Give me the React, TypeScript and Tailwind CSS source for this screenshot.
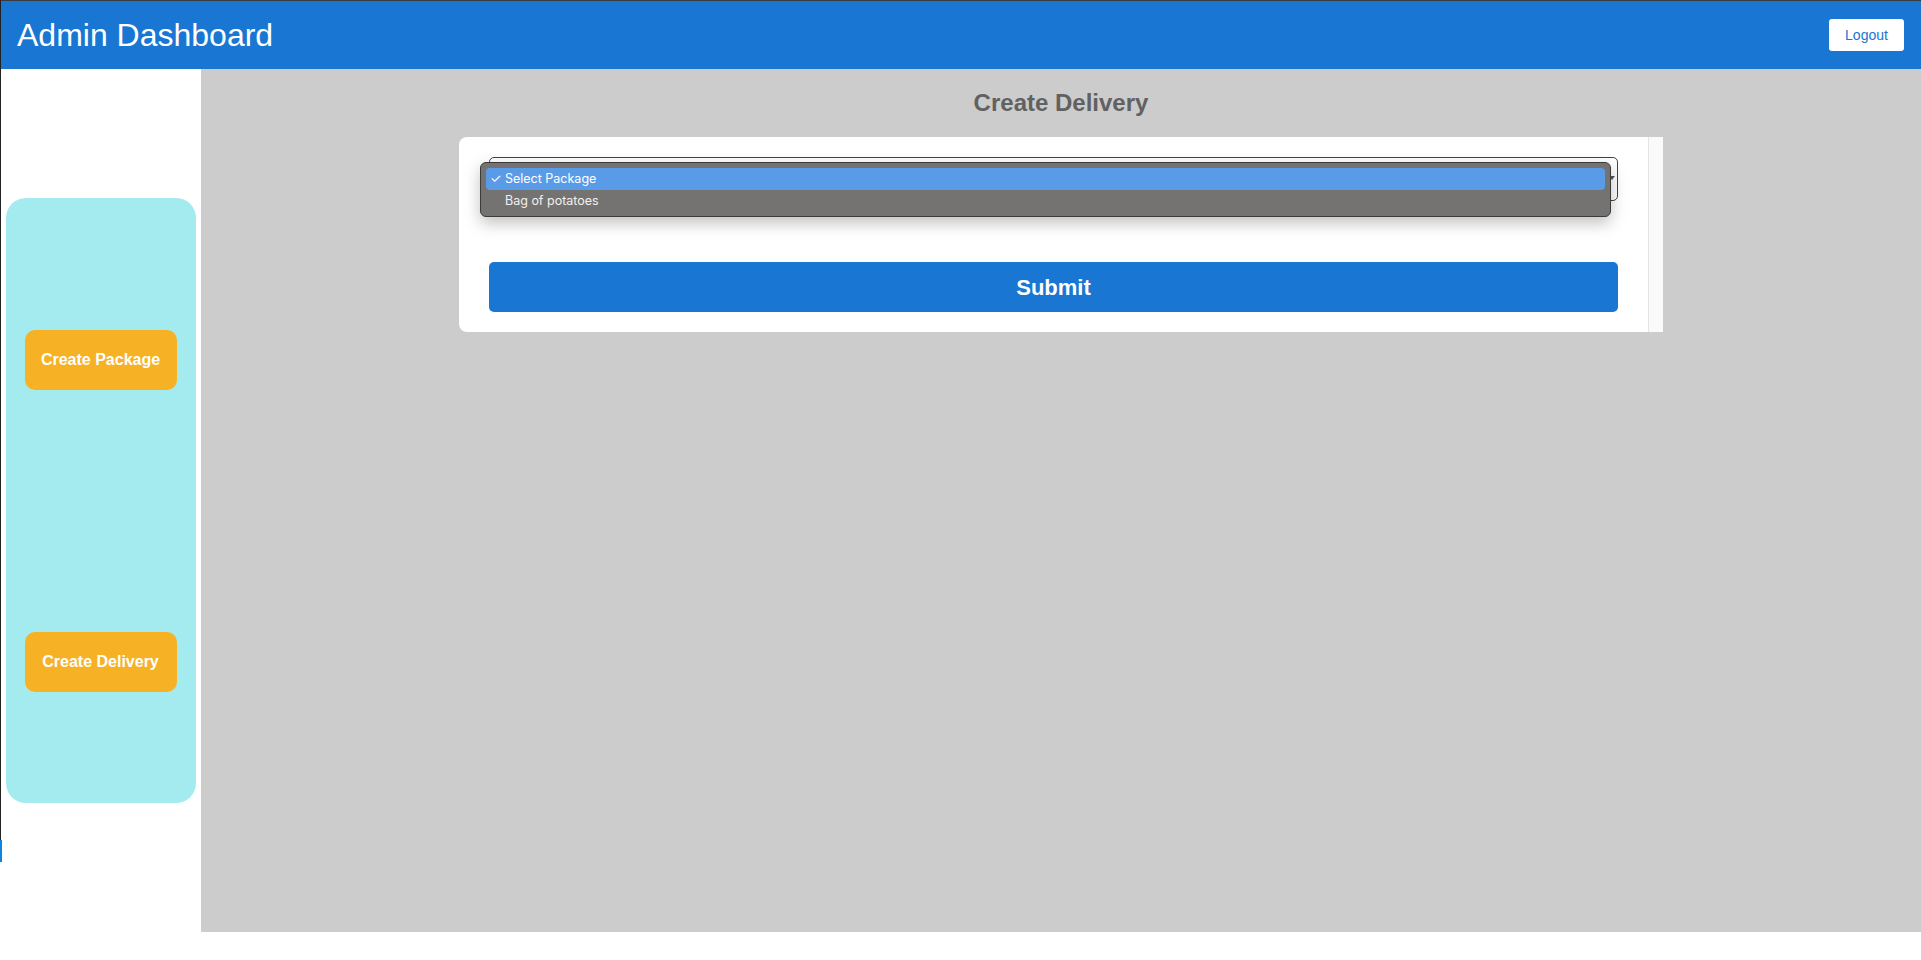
import React from "react"

const sans = "font-['Liberation_Sans',Arial,sans-serif]"

function Header() {
  return (
    <div className={`flex h-[69px] items-center justify-between border-t border-[#3a3a3a] bg-[#1976d2] ${sans}`}>
      <h1 className="pl-[17px] text-[32px] leading-none text-white">Admin Dashboard</h1>
      <button className="mr-[17px] h-[32px] w-[75px] rounded-[3px] bg-white text-[14px] text-[#1976d2]">Logout</button>
    </div>
  )
}

function Sidebar() {
  return (
    <div className="flex w-[201px] shrink-0 items-center justify-center bg-white">
      <div className="flex h-[605px] w-[190px] flex-col items-center gap-[242px] rounded-[20px] bg-[#a4ebef] pt-[132px]">
        <button className={`h-[60px] w-[152px] rounded-[10px] bg-[#f6b224] text-[16px] font-bold text-white ${sans}`}>Create Package</button>
        <button className={`h-[60px] w-[152px] rounded-[10px] bg-[#f6b224] text-[16px] font-bold text-white ${sans}`}>Create Delivery</button>
      </div>
    </div>
  )
}

function PackageSelect() {
  return (
    <div className="relative h-[44px]">
      {/* the closed select underneath */}
      <div className="h-full rounded-[5px] border border-[#444] bg-white" />
      <div className="absolute right-[3px] top-[19px] h-0 w-0 border-x-[3px] border-t-[4px] border-x-transparent border-t-[#555]" />
      {/* native popup, opened */}
      <div className="absolute left-[-9px] top-[5px] h-[55px] w-[1131px] rounded-[6px] border border-[#3b3b3b] bg-[#747372] pl-[5px] pr-[5px] pt-[5px] shadow-[0_6px_16px_rgba(0,0,0,0.25)] font-['Inter',sans-serif]">
        <div className="flex h-[22px] items-center rounded-[4px] bg-[#5a9be8] text-[12.5px] text-white">
          <span className="w-[19px] pl-[4px] text-[13px]">✓</span>
          <span>Select Package</span>
        </div>
        <div className="flex h-[22px] items-center pl-[19px] text-[12.5px] text-[#f0f0f0]">Bag of potatoes</div>
      </div>
    </div>
  )
}

export default function App() {
  return (
    <div className="relative min-h-[960px] bg-white">
      <div className="flex h-[932px] flex-col">
        <Header />
        <div className="flex flex-1">
          <Sidebar />
          <main className="flex flex-1 flex-col items-center bg-[#cccccc]">
            <div className="flex h-[68px] items-center">
              <h2 className={`text-[24px] font-bold text-[#616161] ${sans}`}>Create Delivery</h2>
            </div>
            <div className="flex h-[195px] w-[70%] rounded-l-[8px] bg-white">
              <div className="flex-1 px-[30px] pt-[20px]">
                <PackageSelect />
                <button className={`mt-[61px] h-[50px] w-full rounded-[5px] bg-[#1976d2] text-[22px] font-bold text-white ${sans}`}>Submit</button>
              </div>
              <div className="w-[15px] border-l border-[#e4e4e4] bg-[#fafafa]" />
            </div>
          </main>
        </div>
      </div>
      {/* window edge */}
      <div className="absolute left-0 top-0 h-[840px] w-px bg-[#222]" />
      <div className="absolute left-0 top-[840px] h-[22px] w-[2px] bg-[#0a84e0]" />
    </div>
  )
}
